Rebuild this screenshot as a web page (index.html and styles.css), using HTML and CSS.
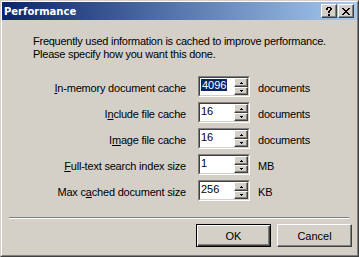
FILE: index.html
```html
<!DOCTYPE html>
<html>
<head>
<meta charset="utf-8">
<link rel="stylesheet" href="styles.css">
</head>
<body>
<div class="window">
  <div class="frame">
    <div class="titlebar">
      <span class="title">Performance</span>
      <div class="tbtns">
        <span class="tbtn">
          <svg width="6" height="9" viewBox="0 0 6 9" shape-rendering="crispEdges">
            <path d="M1 0h4v1h-4zM0 1h2v2h-2zM4 1h2v2h-2zM3 3h2v1h-2zM2 4h2v2h-2zM2 7h2v2h-2z" fill="#000"/>
          </svg>
        </span>
        <span class="tbtn">
          <svg width="8" height="7" viewBox="0 0 8 7" shape-rendering="crispEdges">
            <path d="M0 0h2v1h-2zM6 0h2v1h-2zM1 1h2v1h-2zM5 1h2v1h-2zM2 2h4v1h-4zM3 3h2v1h-2zM2 4h4v1h-4zM1 5h2v1h-2zM5 5h2v1h-2zM0 6h2v1h-2zM6 6h2v1h-2z" fill="#000"/>
          </svg>
        </span>
      </div>
    </div>
    <div class="client">
      <p class="intro">Frequently used information is cached to improve performance.<br>Please specify how you want this done.</p>
      <div class="form">
        <label class="lbl"><u>I</u>n-memory document cache</label>
        <div class="spin"><div class="spin-in"><div class="field"><span class="sel">4096</span></div><div class="arrows"><span class="ab ab-up"><svg width="3" height="2" viewBox="0 0 3 2" shape-rendering="crispEdges"><path d="M1 0h1v1h-1zM0 1h3v1h-3z" fill="#000"/></svg></span><span class="ab ab-down"><svg width="3" height="2" viewBox="0 0 3 2" shape-rendering="crispEdges"><path d="M0 0h3v1h-3zM1 1h1v1h-1z" fill="#000"/></svg></span></div></div></div>
        <span class="unit">documents</span>

        <label class="lbl">I<u>n</u>clude file cache</label>
        <div class="spin"><div class="spin-in"><div class="field"><span>16</span></div><div class="arrows"><span class="ab ab-up"><svg width="3" height="2" viewBox="0 0 3 2" shape-rendering="crispEdges"><path d="M1 0h1v1h-1zM0 1h3v1h-3z" fill="#000"/></svg></span><span class="ab ab-down"><svg width="3" height="2" viewBox="0 0 3 2" shape-rendering="crispEdges"><path d="M0 0h3v1h-3zM1 1h1v1h-1z" fill="#000"/></svg></span></div></div></div>
        <span class="unit">documents</span>

        <label class="lbl">I<u>m</u>age file cache</label>
        <div class="spin"><div class="spin-in"><div class="field"><span>16</span></div><div class="arrows"><span class="ab ab-up"><svg width="3" height="2" viewBox="0 0 3 2" shape-rendering="crispEdges"><path d="M1 0h1v1h-1zM0 1h3v1h-3z" fill="#000"/></svg></span><span class="ab ab-down"><svg width="3" height="2" viewBox="0 0 3 2" shape-rendering="crispEdges"><path d="M0 0h3v1h-3zM1 1h1v1h-1z" fill="#000"/></svg></span></div></div></div>
        <span class="unit">documents</span>

        <label class="lbl"><u>F</u>ull-text search index size</label>
        <div class="spin"><div class="spin-in"><div class="field"><span>1</span></div><div class="arrows"><span class="ab ab-up"><svg width="3" height="2" viewBox="0 0 3 2" shape-rendering="crispEdges"><path d="M1 0h1v1h-1zM0 1h3v1h-3z" fill="#000"/></svg></span><span class="ab ab-down"><svg width="3" height="2" viewBox="0 0 3 2" shape-rendering="crispEdges"><path d="M0 0h3v1h-3zM1 1h1v1h-1z" fill="#000"/></svg></span></div></div></div>
        <span class="unit">MB</span>

        <label class="lbl">Max c<u>a</u>ched document size</label>
        <div class="spin"><div class="spin-in"><div class="field"><span>256</span></div><div class="arrows"><span class="ab ab-up"><svg width="3" height="2" viewBox="0 0 3 2" shape-rendering="crispEdges"><path d="M1 0h1v1h-1zM0 1h3v1h-3z" fill="#000"/></svg></span><span class="ab ab-down"><svg width="3" height="2" viewBox="0 0 3 2" shape-rendering="crispEdges"><path d="M0 0h3v1h-3zM1 1h1v1h-1z" fill="#000"/></svg></span></div></div></div>
        <span class="unit">KB</span>
      </div>
      <div class="sep"></div>
      <div class="buttons">
        <button class="btn btn-default">OK</button>
        <button class="btn">Cancel</button>
      </div>
    </div>
  </div>
</div>
</body>
</html>
```
FILE: styles.css
```css
html, body {
  margin: 0;
  padding: 0;
  background: #d4d0c8;
}
.window {
  width: 359px;
  height: 257px;
  box-sizing: border-box;
  border: 1px solid;
  border-color: #d4d0c8 #404040 #404040 #d4d0c8;
  background: #d4d0c8;
  font-family: "Liberation Sans", Arial, sans-serif;
  font-size: 11px;
  color: #000;
}
.frame {
  height: 100%;
  box-sizing: border-box;
  border: 1px solid;
  border-color: #fff #808080 #808080 #fff;
  display: flex;
  flex-direction: column;
}
.titlebar {
  height: 18px;
  flex: none;
  display: flex;
  align-items: center;
  justify-content: space-between;
  background: linear-gradient(to right, #0a246a, #a6caf0);
}
.title {
  font-family: "DejaVu Sans", sans-serif;
  font-weight: bold;
  font-size: 10px;
  color: #fff;
  padding-left: 2px;
  padding-top: 2px;
  line-height: 14px;
}
.tbtns {
  display: flex;
  gap: 1px;
  margin-right: 3px;
}
.tbtn {
  width: 16px;
  height: 14px;
  box-sizing: border-box;
  background: #d4d0c8;
  border: 1px solid;
  border-color: #fff #404040 #404040 #fff;
  box-shadow: inset -1px -1px #808080;
  display: flex;
  align-items: center;
  justify-content: center;
}
.tbtn svg {
  display: block;
}
.client {
  flex: 1;
  display: flex;
  flex-direction: column;
  padding-top: 15px;
}
.intro {
  margin: 0 0 15px 0;
  padding-left: 31px;
  line-height: 13px;
  letter-spacing: -0.25px;
}
.form {
  display: grid;
  grid-template-columns: 184px 52px auto;
  grid-auto-rows: 21px;
  column-gap: 12px;
  row-gap: 5px;
  align-items: center;
}
.lbl {
  text-align: right;
  line-height: 13px;
  padding-top: 3px;
  white-space: nowrap;
  letter-spacing: -0.2px;
}
.unit {
  margin-left: -4px;
  line-height: 13px;
  padding-top: 3px;
  letter-spacing: -0.2px;
}
.spin {
  width: 52px;
  height: 21px;
  box-sizing: border-box;
  border: 1px solid;
  border-color: #808080 #fff #fff #808080;
}
.spin-in {
  height: 100%;
  box-sizing: border-box;
  border: 1px solid;
  border-color: #404040 #d4d0c8 #d4d0c8 #404040;
  background: #fff;
  display: flex;
}
.field {
  flex: 1;
  padding: 1px 0 0 1px;
  line-height: 12px;
}
.sel {
  background: #0a246a;
  color: #fff;
  display: inline-block;
  padding: 0 1px 0 1px;
}
.arrows {
  width: 14px;
  display: flex;
  flex-direction: column;
}
.ab {
  box-sizing: border-box;
  background: #d4d0c8;
  border: 1px solid;
  border-color: #fff #404040 #404040 #fff;
  box-shadow: inset -1px -1px #808080;
  display: flex;
  align-items: center;
  justify-content: center;
}
.ab-up {
  height: 9px;
}
.ab-down {
  height: 8px;
}
.ab svg {
  display: block;
}
.sep {
  margin: 16px 8px 0 7px;
  height: 0;
  border-top: 1px solid #808080;
  border-bottom: 1px solid #fff;
}
.buttons {
  display: flex;
  justify-content: flex-end;
  gap: 6px;
  padding: 5px 5px 0 0;
}
.btn {
  width: 75px;
  height: 23px;
  box-sizing: border-box;
  margin: 0;
  padding: 0;
  font-family: "Liberation Sans", Arial, sans-serif;
  font-size: 11px;
  color: #000;
  background: #d4d0c8;
  border: 1px solid;
  border-color: #fff #404040 #404040 #fff;
  box-shadow: inset -1px -1px #808080;
}
.btn-default {
  border-color: #000;
  box-shadow: inset 1px 1px #fff, inset -1px -1px #404040, inset -2px -2px #808080;
}
```
